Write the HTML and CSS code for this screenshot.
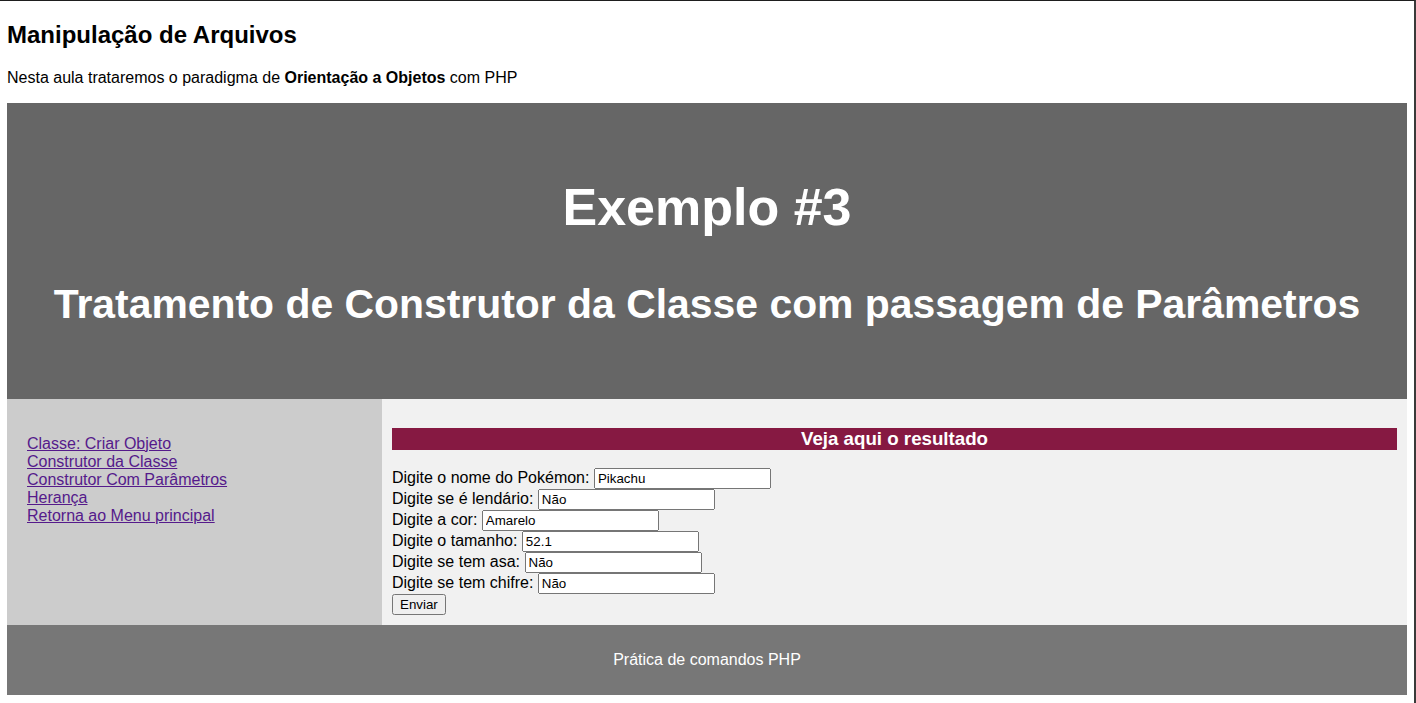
FILE: index.html
```html
<!DOCTYPE html>
<html lang="pt-BR">
<head>
<meta charset="utf-8">
<title>Manipulação de Arquivos</title>
<link rel="stylesheet" href="styles.css">
</head>
<body>
<h2 class="page-title">Manipulação de Arquivos</h2>
<p class="intro">Nesta aula trataremos o paradigma de <b>Orientação a Objetos</b> com PHP</p>

<header class="banner">
  <h1 class="banner-title">Exemplo #3</h1>
  <h2 class="banner-subtitle">Tratamento de Construtor da Classe com passagem de Parâmetros</h2>
</header>

<div class="content">
  <nav class="side">
    <a href="#" class="side-link">Classe: Criar Objeto</a><br>
    <a href="#" class="side-link">Construtor da Classe</a><br>
    <a href="#" class="side-link">Construtor Com Parâmetros</a><br>
    <a href="#" class="side-link">Herança</a><br>
    <a href="#" class="side-link">Retorna ao Menu principal</a>
  </nav>
  <main class="main">
    <h3 class="result-bar">Veja aqui o resultado</h3>
    <form class="poke-form">
      Digite o nome do Pokémon: <input class="field" type="text" value="Pikachu"><br>
      Digite se é lendário: <input class="field" type="text" value="Não"><br>
      Digite a cor: <input class="field" type="text" value="Amarelo"><br>
      Digite o tamanho: <input class="field" type="text" value="52.1"><br>
      Digite se tem asa: <input class="field" type="text" value="Não"><br>
      Digite se tem chifre: <input class="field" type="text" value="Não"><br>
      <button class="send" type="button">Enviar</button>
    </form>
  </main>
</div>

<footer class="footer">
  <p class="footer-text">Prática de comandos PHP</p>
</footer>
</body>
</html>
```

FILE: styles.css
```css
html {
  border-top: 1px solid #1e1e1e;
  border-right: 2px solid #3a3a3a;
}

body {
  margin: 0 7px 8px;
  font-family: "Liberation Sans", Arial, sans-serif;
  font-size: 16px;
  color: #000;
}

.page-title {
  font-size: 24px;
  margin: 19.92px 0;
}

.banner {
  background: #666666;
  color: #ffffff;
  text-align: center;
  padding: 40px 0 37px;
}

.banner-title {
  font-size: 52px;
  margin: 34px 0 0;
  line-height: normal;
}

.banner-subtitle {
  font-size: 40.9px;
  margin: 44px 0 34px;
  line-height: normal;
}

.content {
  display: flex;
}

.side {
  width: 375px;
  flex: none;
  background: #cccccc;
  padding: 36px 20px 20px;
  box-sizing: border-box;
}

.side-link {
  color: #551a8b;
}

.main {
  flex: 1;
  background: #f1f1f1;
  padding: 10px;
}

.result-bar {
  background: #861942;
  color: #ffffff;
  text-align: center;
  font-size: 18.72px;
  margin: 18.72px 0;
}

.poke-form {
  margin: 0;
}

.field {
  font-family: "Liberation Sans", Arial, sans-serif;
  font-size: 13.333px;
  width: 169px;
}

.send {
  font-family: "Liberation Sans", Arial, sans-serif;
  font-size: 13.333px;
}

.footer {
  background: #777777;
  color: #ffffff;
  text-align: center;
  padding: 10px 0;
}

.footer-text {
  margin: 16px 0;
}
```
